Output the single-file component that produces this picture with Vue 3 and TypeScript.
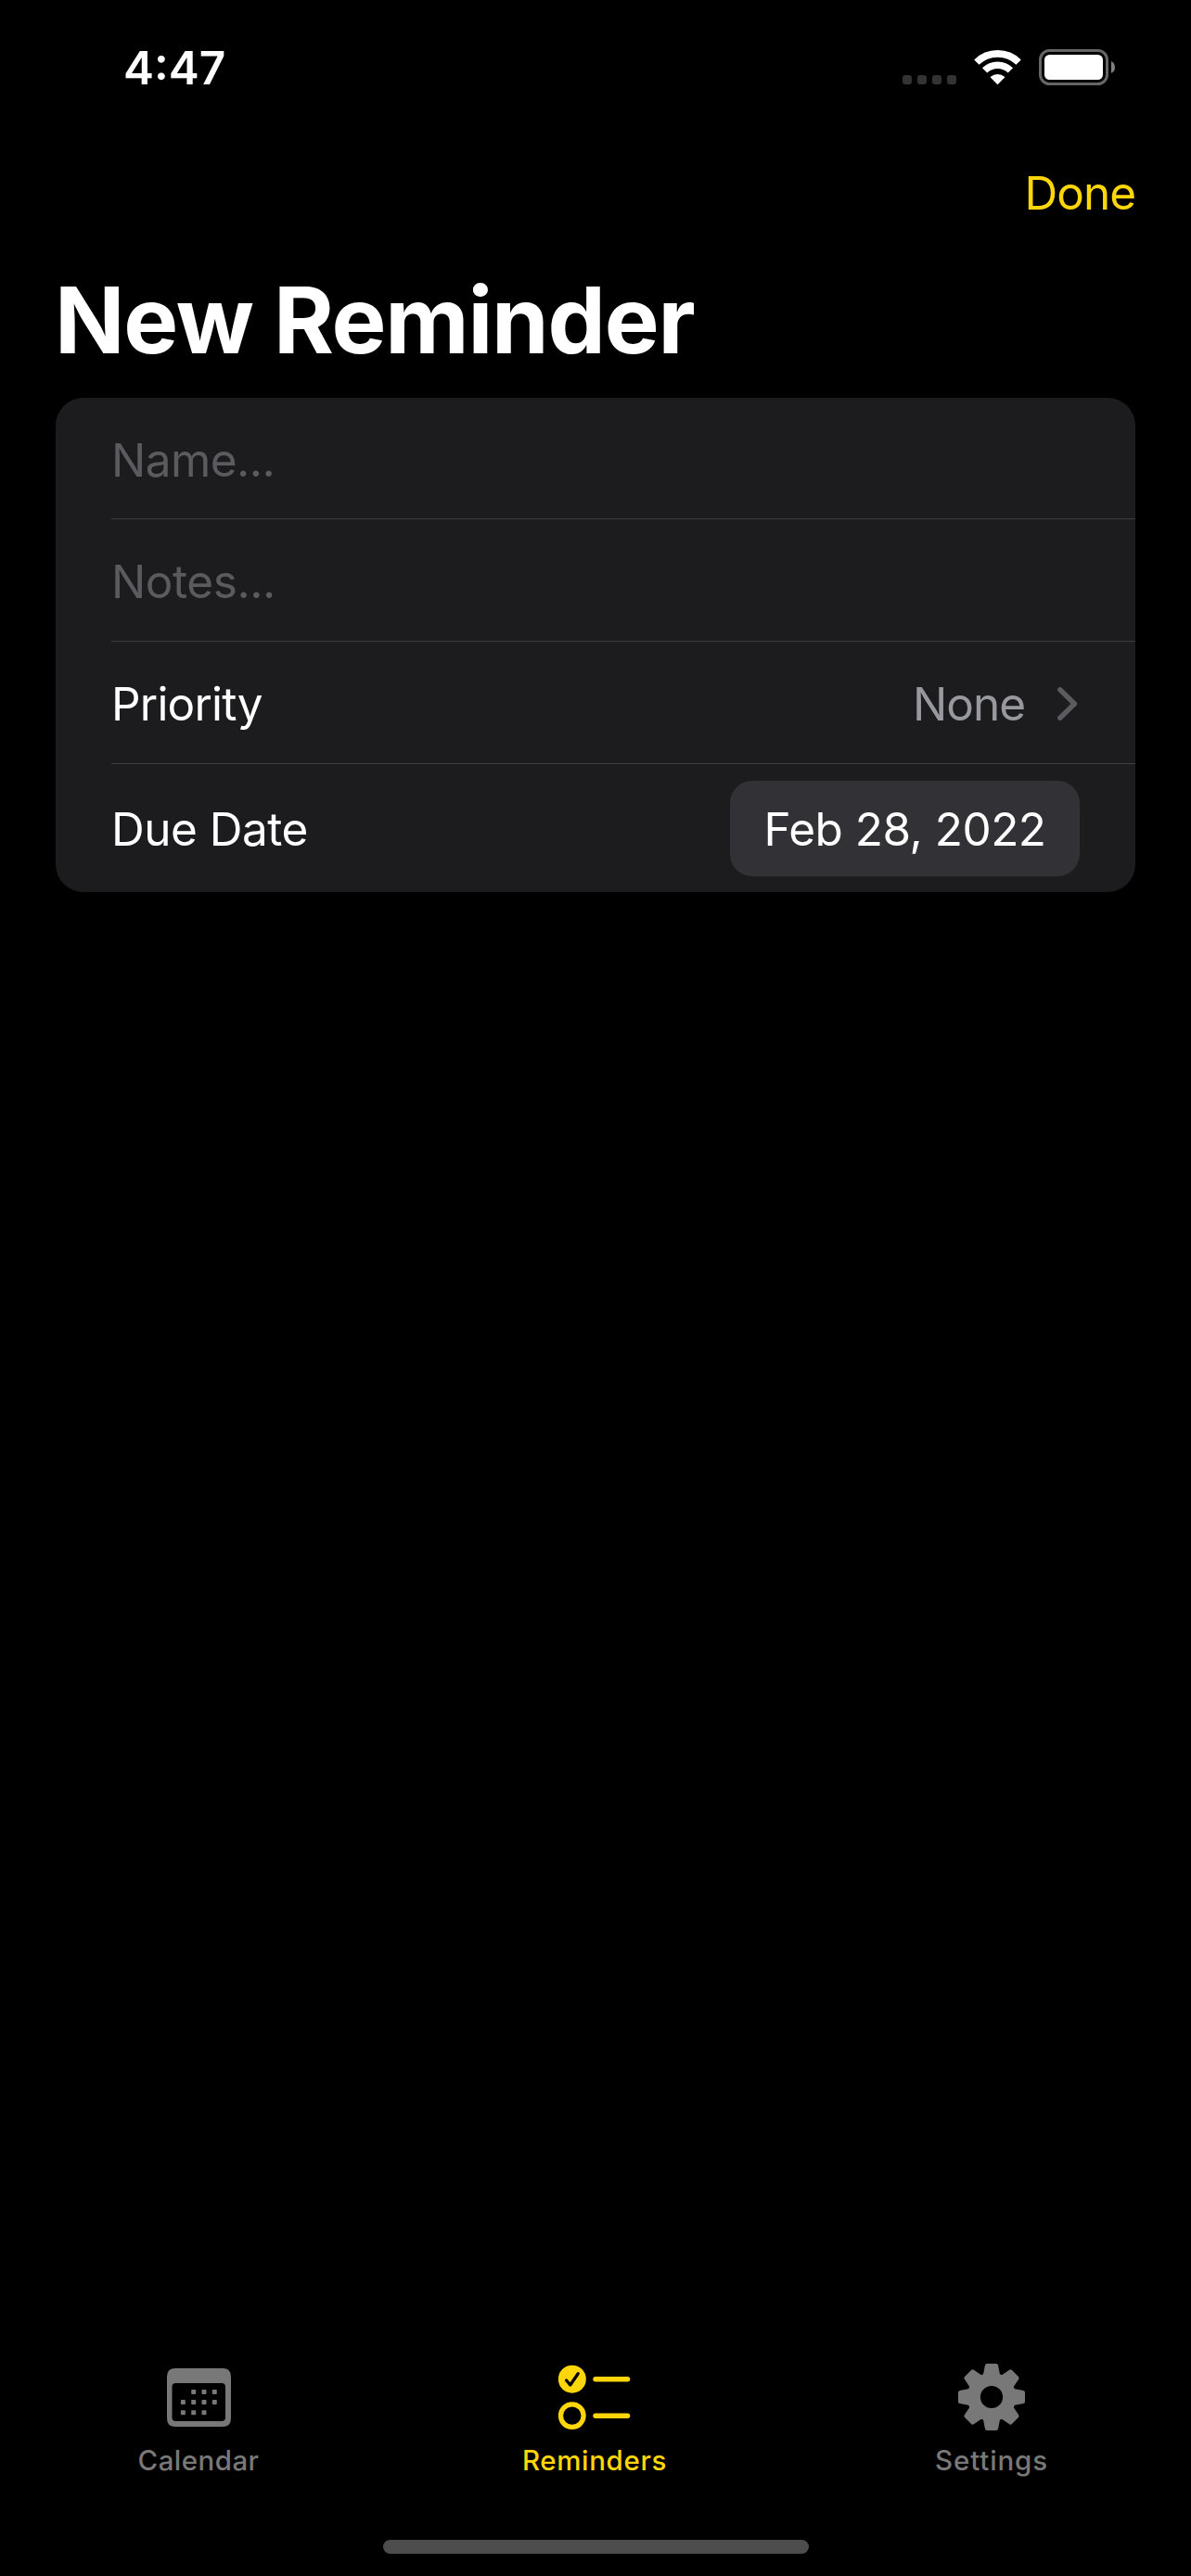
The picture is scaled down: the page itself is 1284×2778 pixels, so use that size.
<script setup lang="ts">
interface Point {
  x: number
  y: number
}

const gearAngles: number[] = Array.from({ length: 8 }, (_, i) => i * 45)

const calendarDots: Point[] = [
  { x: 26.2, y: 22.9 }, { x: 37.5, y: 22.9 }, { x: 48.8, y: 22.9 },
  { x: 14.9, y: 34.1 }, { x: 26.2, y: 34.1 }, { x: 37.5, y: 34.1 }, { x: 48.8, y: 34.1 },
  { x: 14.9, y: 45.3 }, { x: 26.2, y: 45.3 }, { x: 37.5, y: 45.3 },
]
</script>

<template>
  <div class="screen">
    <header class="status">
      <span class="time">4:47</span>
      <div class="indicators">
        <div class="cellular"><i v-for="n in 4" :key="n"></i></div>
        <svg class="wifi" width="51" height="38" viewBox="0 0 51 38">
          <g fill="none" stroke="#fff" stroke-width="7.6">
            <path d="M2.9 13.1A32.4 32.4 0 0 1 48.1 13.1" />
            <path d="M11.6 21.9A19.8 19.8 0 0 1 39.4 21.9" />
          </g>
          <path d="M25.5 37.2L17.8 29.5Q17.6 29.2 18 28.8Q21.2 26 25.5 26T33 28.8Q33.4 29.2 33.2 29.5Z" fill="#fff" />
        </svg>
        <svg class="battery" width="82" height="39" viewBox="0 0 82 39">
          <rect x="1.5" y="1.5" width="72" height="36" rx="10" fill="none" stroke="#666" stroke-width="3" />
          <rect x="6" y="6" width="63" height="27" rx="5.5" fill="#fff" />
          <path d="M78 13Q82 15 82 19.5T78 26Z" fill="#808080" />
        </svg>
      </div>
    </header>

    <nav class="navbar"><span class="done">Done</span></nav>
    <h1 class="title">New Reminder</h1>

    <main class="card">
      <div class="row first"><span class="placeholder name">Name...</span></div>
      <div class="row"><span class="placeholder notes">Notes...</span></div>
      <div class="row">
        <span class="priority">Priority</span>
        <span class="value">None</span>
        <svg class="chevron" width="22" height="36" viewBox="0 0 22 36">
          <path d="M2.8 2.8L18.4 18L2.8 33.2" fill="none" stroke="#5a5a5f" stroke-width="5.4" stroke-linecap="round" stroke-linejoin="round" />
        </svg>
      </div>
      <div class="row last">
        <span class="due">Due Date</span>
        <span class="pill"><span class="date">Feb 28, 2022</span></span>
      </div>
    </main>

    <footer class="tabs">
      <div class="tab">
        <svg width="69" height="76" viewBox="0 -5 69 76">
          <path fill="#787878" fill-rule="evenodd" d="M9 0H60Q69 0 69 9V54Q69 63 60 63H9Q0 63 0 54V9Q0 0 9 0ZM9.5 16Q5.5 16 5.5 20V53Q5.5 57 9.5 57H59Q63 57 63 53V20Q63 16 59 16Z" />
          <rect v-for="(d, i) in calendarDots" :key="i" :x="d.x" :y="d.y" width="5" height="5" rx="0.8" fill="#787878" />
        </svg>
        <span class="calendar">Calendar</span>
      </div>
      <div class="tab active">
        <svg width="80" height="76" viewBox="1 0 80 76">
          <circle cx="15.8" cy="16.7" r="15" fill="#ffd60a" />
          <path d="M9.6 18L13.8 23L22.2 10.7" fill="none" stroke="#000" stroke-width="3.3" stroke-linecap="round" stroke-linejoin="round" />
          <circle cx="15.8" cy="56.1" r="12.3" fill="none" stroke="#ffd60a" stroke-width="5.2" />
          <path d="M41 16.7H75.6M41 56.3H75.6" stroke="#ffd60a" stroke-width="5.4" stroke-linecap="round" />
        </svg>
        <span class="reminders">Reminders</span>
      </div>
      <div class="tab">
        <svg width="76" height="76" viewBox="-37 -36 76 76">
          <circle r="19.2" fill="none" stroke="#787878" stroke-width="14.2" />
          <path v-for="a in gearAngles" :key="a" :transform="`rotate(${a})`" d="M-7.2 -22L-4.9 -33.8H4.9L7.2 -22Z" fill="#787878" stroke="#787878" stroke-width="4.4" stroke-linejoin="round" />
        </svg>
        <span class="settings">Settings</span>
      </div>
    </footer>
    <div class="home"></div>
  </div>
</template>

<style>
body {
  background: #000;
}
</style>

<style scoped>
.screen {
  width: 1284px;
  height: 2778px;
  display: flex;
  flex-direction: column;
  background: #000;
  color: #fff;
  font-family: Inter, "Liberation Sans", sans-serif;
  font-size: 49.5px;
  white-space: nowrap;
  overflow: hidden;
}
.status {
  height: 146px;
  box-sizing: border-box;
  padding: 0 82px 0 133px;
  display: flex;
  justify-content: space-between;
}
.time {
  font-weight: 600;
  line-height: 146px;
}
.indicators {
  display: flex;
  align-items: flex-start;
}
.cellular {
  display: flex;
  gap: 6px;
  margin: 81px 19px 0 0;
}
.cellular i {
  width: 10px;
  height: 10px;
  border-radius: 3px;
  background: #333;
}
.wifi {
  margin: 54px 19px 0 0;
}
.battery {
  margin-top: 53px;
}
.navbar {
  height: 124px;
  padding-right: 60px;
  text-align: right;
  line-height: 124px;
  color: #ffd60a;
  letter-spacing: -1px;
}
.title {
  margin: 0;
  height: 159px;
  padding-left: 59px;
  font-size: 99px;
  font-weight: 700;
  line-height: 150px;
  letter-spacing: -1.2px;
}
.card {
  margin: 0 60px;
  padding-left: 60px;
  border-radius: 30px;
  background: #1c1c1e;
}
.row {
  height: 132px;
  box-sizing: border-box;
  padding: 2px 60px 0 0;
  border-bottom: 1px solid #3d3d41;
  display: flex;
  align-items: center;
  justify-content: space-between;
}
.row.first {
  height: 131px;
  padding-top: 4px;
}
.row.last {
  height: 138px;
  padding-top: 1px;
  border: 0;
}
.placeholder {
  color: #5a5a5f;
  letter-spacing: -0.55px;
}
.notes {
  letter-spacing: -0.45px;
}
.priority {
  letter-spacing: -0.8px;
}
.due,
.date {
  letter-spacing: -0.5px;
}
.value {
  margin-left: auto;
  color: #98989f;
  letter-spacing: -1px;
}
.chevron {
  margin: 0 2px 0 35px;
}
.pill {
  width: 377px;
  height: 103px;
  border-radius: 24px;
  background: #323136;
  display: flex;
  align-items: center;
  justify-content: center;
}
.tabs {
  margin-top: auto;
  height: 190px;
  display: flex;
}
.tab {
  flex: 1;
  display: flex;
  flex-direction: column;
  align-items: center;
  font-size: 29.5px;
  font-weight: 500;
  line-height: 36px;
  color: #787878;
}
.tab span {
  margin-top: 10px;
}
.tab .calendar {
  letter-spacing: 0.45px;
}
.tab .reminders {
  margin-right: 2px;
  letter-spacing: 0.65px;
}
.tab .settings {
  margin-right: 2px;
  letter-spacing: 0.85px;
}
.tab.active {
  color: #ffd60a;
}
.home {
  width: 459px;
  height: 15px;
  margin: 0 0 24px 413px;
  border-radius: 8px;
  background: #4d4d4d;
}
</style>
